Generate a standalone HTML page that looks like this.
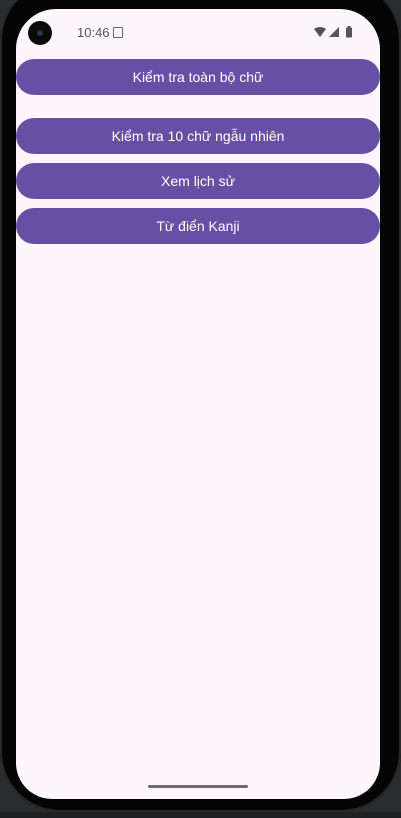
<!DOCTYPE html>
<html><head><meta charset="utf-8"><style>
html,body{margin:0;padding:0;}
body{width:401px;height:818px;background:#2b2c2e;position:relative;overflow:hidden;font-family:"Liberation Sans",sans-serif;}
.frame{position:absolute;left:0;top:-20px;width:401px;height:832px;background:#050505;border-radius:60px;box-shadow:inset 0 0 0 2px #2a2a2a;}
.bot{position:absolute;left:0;top:812px;width:401px;height:6px;background:#1f2022;}
.screen{position:absolute;left:16px;top:9px;width:364px;height:790px;background:#fdf7fd;border-radius:40px 40px 36px 36px;overflow:hidden;}
.cam{position:absolute;left:12px;top:12px;width:24px;height:24px;border-radius:50%;background:#0a0a0a;}
.cam:after{content:"";position:absolute;left:9px;top:9px;width:6px;height:6px;border-radius:50%;background:#2a3550;}
.time{position:absolute;left:61px;top:16px;font-size:13px;color:#555;}
.btn{position:absolute;left:0;width:364px;height:36px;background:#6750a4;border-radius:18px;color:#fff;font-size:14px;text-align:center;line-height:36px;font-weight:500;}
.bar{position:absolute;left:132px;top:776px;width:100px;height:3px;border-radius:2px;background:#6f6a70;}
</style></head><body>
<div class="frame"></div>
<div class="bot"></div>
<div class="screen">
<div class="cam"></div>
<div class="time">10:46 <span style="display:inline-block;width:8px;height:9px;border:1.5px solid #666;border-radius:1px;vertical-align:-1px"></span></div>
<svg style="position:absolute;left:297px;top:17px" width="42" height="12" viewBox="0 0 42 12">
<path d="M1 3 Q7 -1 13 3 L7 11 Z" fill="#555"/>
<path d="M16 11 L26 1 L26 11 Z" fill="#555"/>
<rect x="33" y="1.5" width="6" height="10" rx="1" fill="#555"/>
<rect x="34.5" y="0" width="3" height="2" fill="#555"/>
</svg>
<div class="btn" style="top:50px">Kiểm tra toàn bộ chữ</div>
<div class="btn" style="top:109px">Kiểm tra 10 chữ ngẫu nhiên</div>
<div class="btn" style="top:154px">Xem lịch sử</div>
<div class="btn" style="top:199px">Từ điển Kanji</div>
<div class="bar"></div>
</div>
</body></html>
